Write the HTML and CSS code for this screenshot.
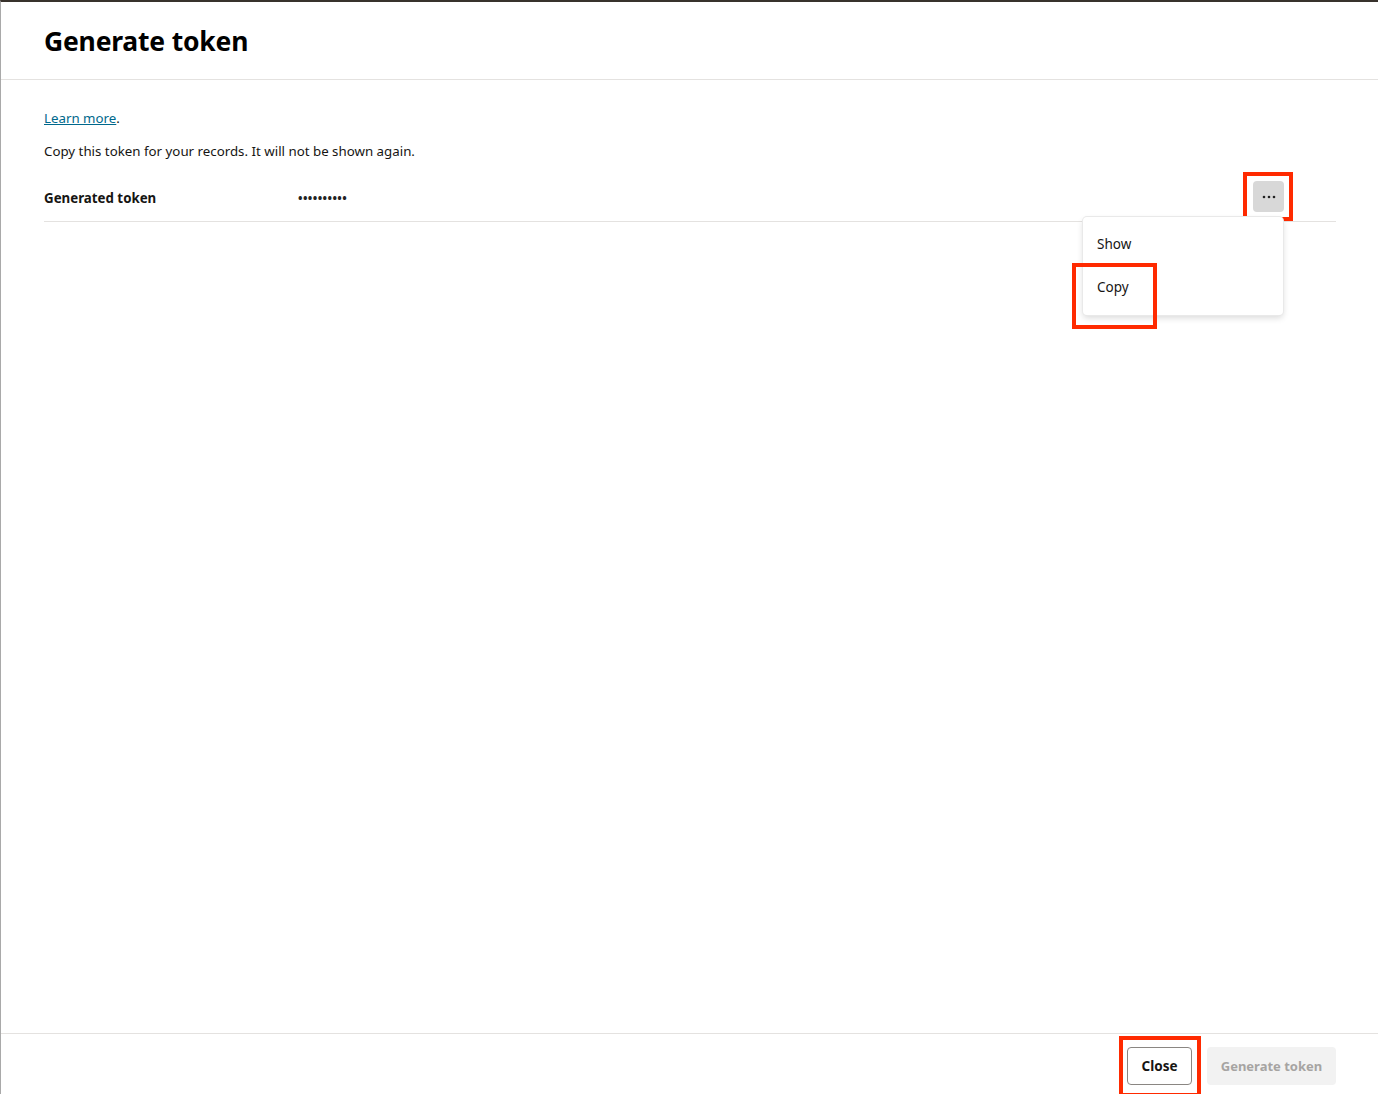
FILE: index.html
```html
<!DOCTYPE html>
<html>
<head>
<meta charset="utf-8">
<link rel="stylesheet" href="styles.css">
</head>
<body>
<div class="frame">
  <div class="dialog">
    <header class="dlg-header">
      <h1 class="title">Generate token</h1>
    </header>
    <main class="dlg-body">
      <p class="learn"><a href="#" class="link">Learn more</a>.</p>
      <p class="note">Copy this token for your records. It will not be shown again.</p>
      <div class="token-row">
        <span class="token-label">Generated token</span>
        <span class="token-value">••••••••••</span>
        <div class="actions">
          <button class="more-btn" aria-label="More actions">
            <svg width="14" height="4" viewBox="0 0 14 4"><circle cx="2" cy="2" r="1.3" fill="#222"/><circle cx="7" cy="2" r="1.3" fill="#222"/><circle cx="12" cy="2" r="1.3" fill="#222"/></svg>
          </button>
          <span class="hl hl-btn"></span>
          <ul class="menu">
            <li class="menu-item">Show</li>
            <li class="menu-item">Copy</li>
          </ul>
          <span class="hl hl-copy"></span>
        </div>
      </div>
    </main>
    <footer class="dlg-footer">
      <div class="close-wrap">
        <button class="btn btn-close">Close</button>
        <span class="hl hl-close"></span>
      </div>
      <button class="btn btn-disabled">Generate token</button>
    </footer>
  </div>
</div>
</body>
</html>
```

FILE: styles.css
```css
* { box-sizing: border-box; }
html, body { margin: 0; padding: 0; }
body {
  font-family: "Noto Sans", "Liberation Sans", sans-serif;
  color: #161513;
  background: #fff;
}
.frame {
  width: 1378px;
  height: 1094px;
  border-top: 2px solid #38322c;
  border-left: 1px solid #a9a9a9;
  overflow: hidden;
}
.dialog {
  height: 100%;
  display: flex;
  flex-direction: column;
}
.dlg-header {
  height: 78px;
  border-bottom: 1px solid #e4e2e0;
  padding: 0 0 0 43px;
  display: flex;
  align-items: center;
}
.title {
  margin: 0;
  font-size: 26.5px;
  font-weight: 700;
  letter-spacing: -0.2px;
  color: #000;
}
.dlg-body {
  flex: 1;
  padding: 27px 42px 0 43px;
}
.learn {
  margin: 0;
  font-size: 13.3px;
  line-height: 22px;
}
.link { color: #00688c; text-decoration: underline; }
.note {
  margin: 11px 0 0;
  font-size: 13.3px;
  line-height: 22px;
}
.token-row {
  margin-top: 13px;
  height: 47px;
  border-bottom: 1px solid #e4e2e0;
  display: flex;
  align-items: center;
  font-size: 13.3px;
}
.token-label {
  width: 254px;
  font-weight: 700;
}
.token-value {
  font-size: 12px;
  letter-spacing: 0.4px;
  font-weight: 700;
  color: #222;
}
.actions {
  margin-left: auto;
  margin-right: 52px;
  position: relative;
  width: 31px;
  height: 31px;
  align-self: flex-start;
  margin-top: 6px;
}
.more-btn {
  width: 31px;
  height: 31px;
  border: none;
  border-radius: 4px;
  background: #d8d8d8;
  display: flex;
  align-items: center;
  justify-content: center;
  padding: 0;
}
.hl {
  position: absolute;
  border: 4px solid #ff2a00;
  pointer-events: none;
}
.hl-btn { left: -10px; top: -9px; width: 50px; height: 49px; }
.menu {
  position: absolute;
  top: 36px;
  right: 1px;
  width: 200px;
  margin: 0;
  padding: 6px 0;
  list-style: none;
  background: #fff;
  border-radius: 4px;
  box-shadow: 0 0 0 1px #e9e9e9, 0 3px 6px rgba(0,0,0,0.15);
  z-index: 2;
}
.menu-item {
  height: 43px;
  line-height: 43px;
  padding-left: 14px;
  font-size: 13.5px;
  color: #161513;
}
.hl-copy { left: -181px; top: 82px; width: 85px; height: 66px; z-index: 3; }
.dlg-footer {
  height: 61px;
  border-top: 1px solid #e4e2e0;
  display: flex;
  align-items: center;
  justify-content: flex-end;
  padding: 3px 42px 0 0;
  gap: 15px;
}
.close-wrap { position: relative; }
.btn {
  height: 38px;
  border-radius: 4px;
  font-family: inherit;
  font-size: 13.5px;
  font-weight: 700;
  padding: 0 10px;
  white-space: nowrap;
}
.btn-close {
  background: #fff;
  border: 1px solid #8a8682;
  color: #161513;
  width: 65px;
}
.hl-close { left: -8px; top: -11px; width: 82px; height: 61px; }
.btn-disabled {
  background: #f2f2f2;
  border: none;
  color: #a6a4a2;
  width: 129px;
  font-size: 13px;
}
```
